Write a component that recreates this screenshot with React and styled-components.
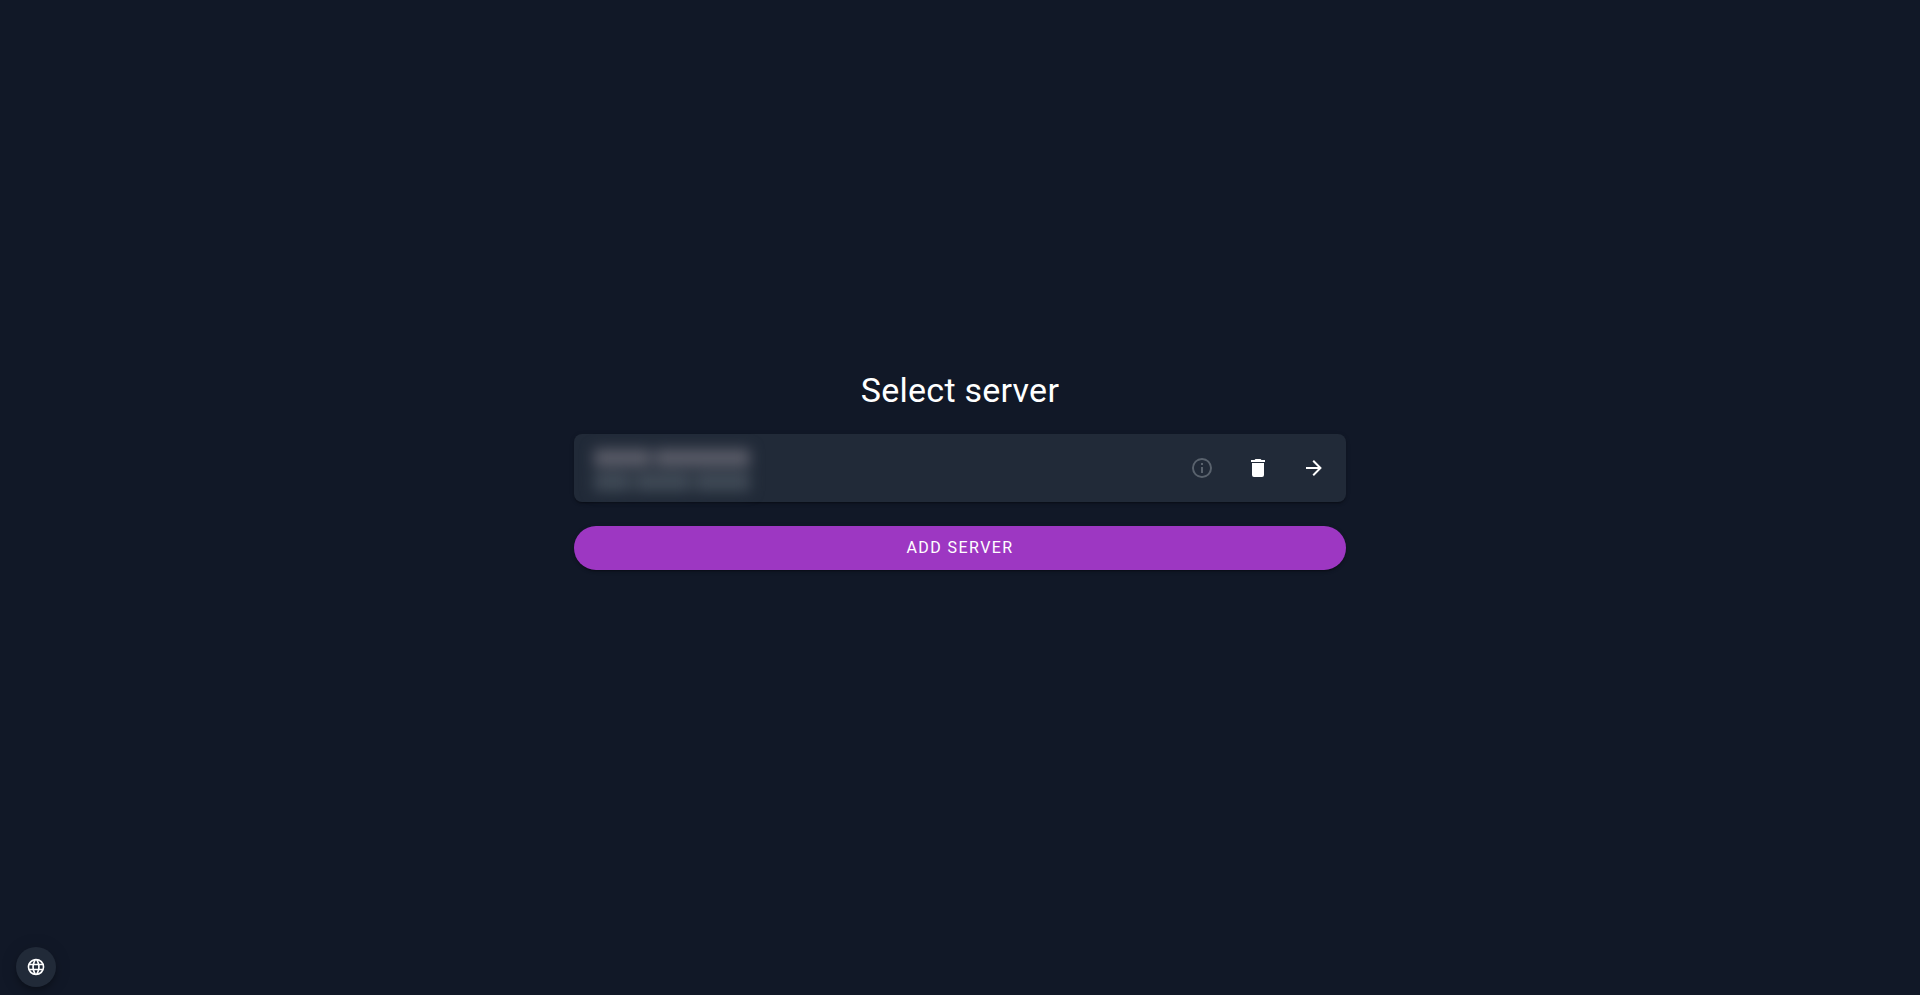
import React from "react";
import styled, { createGlobalStyle } from "styled-components";

const GlobalStyle = createGlobalStyle`
  *, *::before, *::after { box-sizing: border-box; }
  html, body { margin: 0; background: #111827; }
  body { font-family: Roboto, "Liberation Sans", sans-serif; color: #fff; }
`;

const Page = styled.div`
  min-height: 100vh;
  display: flex;
  align-items: center;
  justify-content: center;
  padding-bottom: 55px;
`;

const Content = styled.main`
  width: calc(100% * 5 / 12 - 28px);
  min-width: 320px;
  display: flex;
  flex-direction: column;
`;

const Title = styled.h1`
  margin: 0 0 24px;
  font-size: 34px;
  font-weight: 400;
  line-height: 40px;
  letter-spacing: 0.25px;
  text-align: center;
`;

const ServerCard = styled.section`
  height: 68px;
  margin-bottom: 24px;
  padding: 0 8px 0 20px;
  display: flex;
  align-items: center;
  justify-content: space-between;
  border-radius: 8px;
  background: #212a38;
  box-shadow: 0 3px 1px -2px rgba(0, 0, 0, 0.2), 0 2px 2px rgba(0, 0, 0, 0.14), 0 1px 5px rgba(0, 0, 0, 0.12);
`;

const HiddenDetails = styled.div`
  width: 160px;
  padding-top: 4px;
  display: flex;
  flex-direction: column;
  gap: 6px;
  filter: blur(7px);
`;

const HiddenLine = styled.div`
  display: flex;
  justify-content: space-between;
  height: 18px;
  color: ${(p) => (p.$primary ? "#5a5c68" : "#414b57")};
`;

const HiddenWord = styled.span`
  flex: ${(p) => p.$share};
  margin-right: 4px;
  background: currentColor;
`;

const Actions = styled.div`
  display: flex;
  gap: 8px;
`;

const IconButton = styled.button`
  width: 48px;
  height: 48px;
  padding: 0;
  display: grid;
  place-items: center;
  border: 0;
  border-radius: 50%;
  background: transparent;
  color: #fff;
  cursor: pointer;

  &:disabled { color: #59626d; cursor: default; }
`;

const AddButton = styled.button`
  height: 44px;
  border: 0;
  border-radius: 22px;
  background: #9d37c2;
  color: #fff;
  font-family: inherit;
  font-size: 16px;
  line-height: 20px;
  letter-spacing: 0.0892857em;
  text-transform: uppercase;
  cursor: pointer;
  box-shadow: 0 3px 1px -2px rgba(0, 0, 0, 0.2), 0 2px 2px rgba(0, 0, 0, 0.14), 0 1px 5px rgba(0, 0, 0, 0.12);
`;

const LanguageButton = styled(IconButton)`
  position: fixed;
  left: 16px;
  bottom: 8px;
  width: 40px;
  height: 40px;
  background: #212a38;
  box-shadow: 0 3px 5px -1px rgba(0, 0, 0, 0.2), 0 6px 10px rgba(0, 0, 0, 0.14), 0 1px 18px rgba(0, 0, 0, 0.12);
`;

const Icon = ({ path, size = 24 }) => (
  <svg width={size} height={size} viewBox="0 0 24 24" fill="currentColor" aria-hidden="true">
    <path d={path} />
  </svg>
);

const icons = {
  info: "M11 9h2V7h-2m1 13c-4.41 0-8-3.59-8-8s3.59-8 8-8 8 3.59 8 8-3.59 8-8 8m0-18A10 10 0 0 0 2 12a10 10 0 0 0 10 10 10 10 0 0 0 10-10A10 10 0 0 0 12 2m-1 15h2v-6h-2v6z",
  trash: "M19 4h-3.5l-1-1h-5l-1 1H5v2h14M6 19a2 2 0 0 0 2 2h8a2 2 0 0 0 2-2V7H6v12z",
  arrow: "M4 11v2h12l-5.5 5.5 1.42 1.42L19.84 12l-7.92-7.92L10.5 5.5 16 11H4z",
  web: "M16.36 14c.08-.66.14-1.32.14-2s-.06-1.34-.14-2h3.38c.16.64.26 1.31.26 2s-.1 1.36-.26 2m-5.15 5.56c.6-1.11 1.06-2.31 1.38-3.56h2.95a8.03 8.03 0 0 1-4.33 3.56M14.34 14H9.66c-.1-.66-.16-1.32-.16-2s.06-1.35.16-2h4.68c.09.65.16 1.32.16 2s-.07 1.34-.16 2M12 19.96c-.83-1.2-1.5-2.53-1.91-3.96h3.82c-.41 1.43-1.08 2.76-1.91 3.96M8 8H5.08A7.92 7.92 0 0 1 9.4 4.44C8.8 5.55 8.35 6.75 8 8m-2.92 8H8c.35 1.25.8 2.45 1.4 3.56A8 8 0 0 1 5.08 16m-.82-2C4.1 13.36 4 12.69 4 12s.1-1.36.26-2h3.38c-.08.66-.14 1.32-.14 2s.06 1.34.14 2M12 4.03c.83 1.2 1.5 2.54 1.91 3.97h-3.82c.41-1.43 1.08-2.77 1.91-3.97M18.92 8h-2.95a15.65 15.65 0 0 0-1.38-3.56c1.84.63 3.37 1.9 4.33 3.56M12 2C6.47 2 2 6.5 2 12a10 10 0 0 0 10 10 10 10 0 0 0 10-10A10 10 0 0 0 12 2z",
};

export default function App() {
  return (
    <>
      <GlobalStyle />
      <Page>
        <Content>
          <Title>Select server</Title>
          <ServerCard>
            <HiddenDetails aria-hidden="true">
              <HiddenLine $primary>
                <HiddenWord $share={3} />
                <HiddenWord $share={5} />
              </HiddenLine>
              <HiddenLine>
                <HiddenWord $share={2} />
                <HiddenWord $share={3} />
                <HiddenWord $share={3} />
              </HiddenLine>
            </HiddenDetails>
            <Actions>
              <IconButton type="button" aria-label="Server information" disabled><Icon path={icons.info} /></IconButton>
              <IconButton type="button" aria-label="Remove server"><Icon path={icons.trash} /></IconButton>
              <IconButton type="button" aria-label="Connect to server"><Icon path={icons.arrow} /></IconButton>
            </Actions>
          </ServerCard>
          <AddButton type="button">Add server</AddButton>
        </Content>
      </Page>
      <LanguageButton type="button" aria-label="Change language"><Icon path={icons.web} size={20} /></LanguageButton>
    </>
  );
}
